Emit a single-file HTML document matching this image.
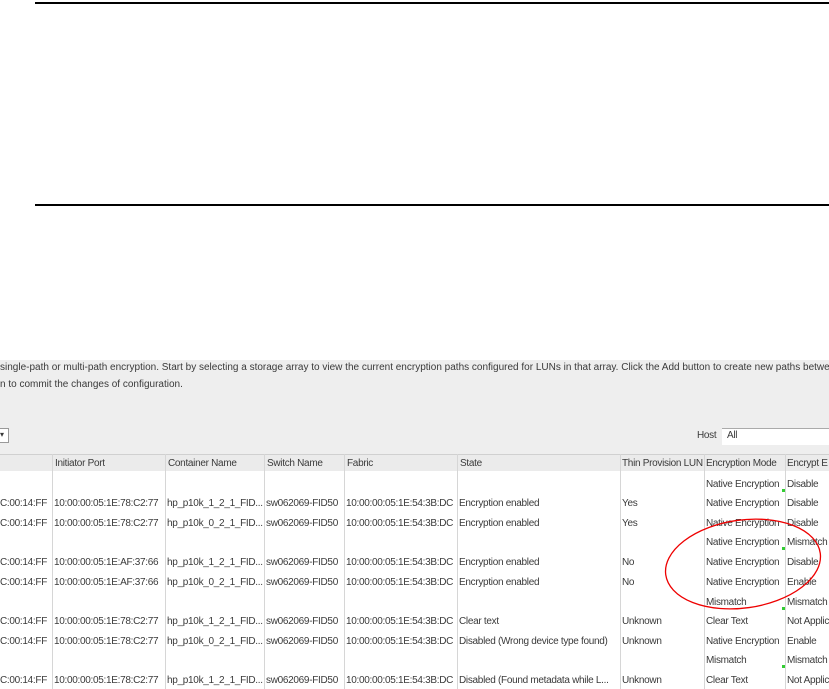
<!DOCTYPE html>
<html><head><meta charset="utf-8"><style>
body{margin:0;width:829px;height:689px;position:relative;background:#fff;overflow:hidden;font-family:"Liberation Sans",sans-serif;font-size:10px;color:#3a3a3a;letter-spacing:-0.3px}
.l{position:absolute;left:35px;right:0;height:2px;background:#000}
#panel{position:absolute;left:0;top:360px;width:829px;height:329px;background:#eeeeee}
.t{position:absolute;white-space:nowrap;line-height:12px}
#hdr{position:absolute;left:0;top:454px;width:829px;height:16px;background:#ebebeb;border-top:1px solid #d0d0d0;border-bottom:1px solid #c4c4c4}
#body{position:absolute;left:0;top:471px;width:829px;height:218px;background:#fff}
.v{position:absolute;top:454px;height:235px;width:1px;background:#d6d6d6}
.g{position:absolute;width:3px;height:3px;background:#3c3}
</style></head><body>
<div class="l" style="top:2px"></div>
<div class="l" style="top:204px"></div>
<div id="panel"></div>
<div class="t" style="left:0;top:362px;letter-spacing:0">single-path or multi-path encryption. Start by selecting a storage array to view the current encryption paths configured for LUNs in that array. Click the Add button to create new paths between</div>
<div class="t" style="left:0;top:379px;letter-spacing:0">n to commit the changes of configuration.</div>
<div style="position:absolute;left:-2px;top:428px;width:9px;height:13px;background:#fff;border:1px solid #999"></div>
<div class="t" style="left:0;top:429px;font-size:8px">▾</div>
<div class="t" style="left:697px;top:430px">Host</div>
<div style="position:absolute;left:722px;top:428px;width:110px;height:16px;background:#fff;border-top:1px solid #aaa"></div>
<div class="t" style="left:727px;top:430px">All</div>
<div id="hdr"></div>
<div id="body"></div>
<div class="v" style="left:52px"></div><div class="v" style="left:165px"></div><div class="v" style="left:264px"></div><div class="v" style="left:344px"></div><div class="v" style="left:457px"></div><div class="v" style="left:620px"></div><div class="v" style="left:704px"></div><div class="v" style="left:785px"></div>
<div class="t" style="left:55px;top:458px">Initiator Port</div>
<div class="t" style="left:168px;top:458px">Container Name</div>
<div class="t" style="left:267px;top:458px">Switch Name</div>
<div class="t" style="left:347px;top:458px">Fabric</div>
<div class="t" style="left:460px;top:458px">State</div>
<div class="t" style="left:622px;top:458px">Thin Provision LUN</div>
<div class="t" style="left:706px;top:458px">Encryption Mode</div>
<div class="t" style="left:787px;top:458px">Encrypt E</div>
<div id="rows"></div>
<script>
var R=[
[479,0,0,0,0,0,0,0,"Native Encryption","Disable",1],
[498,"C:00:14:FF","10:00:00:05:1E:78:C2:77","hp_p10k_1_2_1_FID...","sw062069-FID50","10:00:00:05:1E:54:3B:DC","Encryption enabled","Yes","Native Encryption","Disable"],
[518,"C:00:14:FF","10:00:00:05:1E:78:C2:77","hp_p10k_0_2_1_FID...","sw062069-FID50","10:00:00:05:1E:54:3B:DC","Encryption enabled","Yes","Native Encryption","Disable"],
[537,0,0,0,0,0,0,0,"Native Encryption","Mismatch",1],
[557,"C:00:14:FF","10:00:00:05:1E:AF:37:66","hp_p10k_1_2_1_FID...","sw062069-FID50","10:00:00:05:1E:54:3B:DC","Encryption enabled","No","Native Encryption","Disable"],
[577,"C:00:14:FF","10:00:00:05:1E:AF:37:66","hp_p10k_0_2_1_FID...","sw062069-FID50","10:00:00:05:1E:54:3B:DC","Encryption enabled","No","Native Encryption","Enable"],
[597,0,0,0,0,0,0,0,"Mismatch","Mismatch",1],
[616,"C:00:14:FF","10:00:00:05:1E:78:C2:77","hp_p10k_1_2_1_FID...","sw062069-FID50","10:00:00:05:1E:54:3B:DC","Clear text","Unknown","Clear Text","Not Applic"],
[636,"C:00:14:FF","10:00:00:05:1E:78:C2:77","hp_p10k_0_2_1_FID...","sw062069-FID50","10:00:00:05:1E:54:3B:DC","Disabled (Wrong device type found)","Unknown","Native Encryption","Enable"],
[655,0,0,0,0,0,0,0,"Mismatch","Mismatch",1],
[675,"C:00:14:FF","10:00:00:05:1E:78:C2:77","hp_p10k_1_2_1_FID...","sw062069-FID50","10:00:00:05:1E:54:3B:DC","Disabled (Found metadata while L...","Unknown","Clear Text","Not Applic"]];
var X=[0,54,167,266,346,459,622,706,787],h="";
R.forEach(function(r){for(var i=1;i<10;i++)if(r[i])h+='<div class="t" style="left:'+X[i-1]+'px;top:'+r[0]+'px">'+r[i]+'</div>';if(r[10])h+='<div class="g" style="left:782px;top:'+(r[0]+10)+'px"></div>';});
document.getElementById('rows').innerHTML=h;
</script>
<svg style="position:absolute;left:0;top:0" width="829" height="689"><ellipse cx="743" cy="564" rx="78" ry="44" transform="rotate(-8 743 564)" fill="none" stroke="#e00" stroke-width="1.3"/></svg>
</body></html>
